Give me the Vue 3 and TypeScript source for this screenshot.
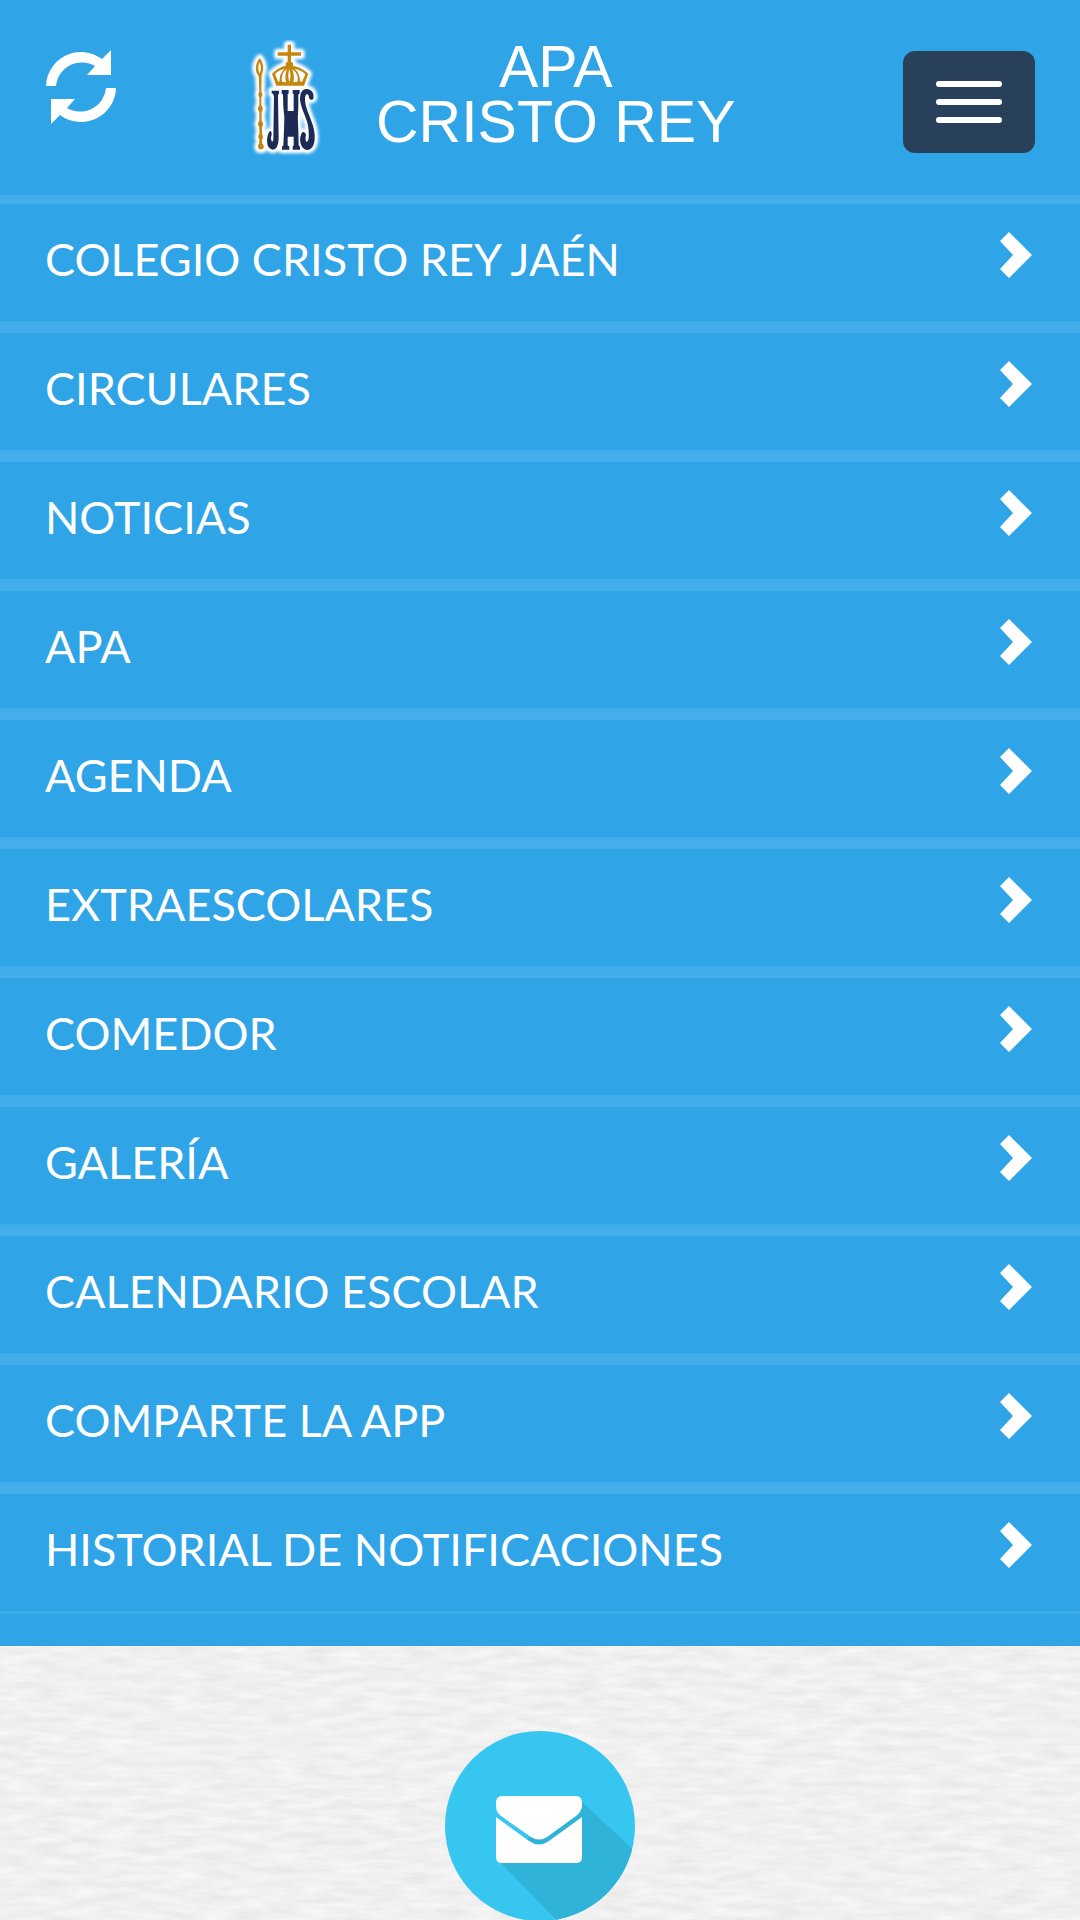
<script setup lang="ts">
interface MenuEntry {
  label: string
  href: string
}

const entries: MenuEntry[] = [
  { label: 'COLEGIO CRISTO REY JAÉN', href: '#colegio' },
  { label: 'CIRCULARES', href: '#circulares' },
  { label: 'NOTICIAS', href: '#noticias' },
  { label: 'APA', href: '#apa' },
  { label: 'AGENDA', href: '#agenda' },
  { label: 'EXTRAESCOLARES', href: '#extraescolares' },
  { label: 'COMEDOR', href: '#comedor' },
  { label: 'GALERÍA', href: '#galeria' },
  { label: 'CALENDARIO ESCOLAR', href: '#calendario' },
  { label: 'COMPARTE LA APP', href: '#comparte' },
  { label: 'HISTORIAL DE NOTIFICACIONES', href: '#historial' },
]
</script>

<template>
  <div class="page">
    <div class="navbar">
      <header class="header">
        <button class="refresh" type="button" aria-label="Actualizar">
          <svg viewBox="0 0 70 74" width="70" height="74" aria-hidden="true">
            <path d="M0 36A35 35 0 0 1 56 9L65 0V25H41L49 16A26 26 0 0 0 10 36Z" />
            <path d="M70 38A35 35 0 0 1 14 65L5 74V49H29L21 58A26 26 0 0 0 60 38Z" />
          </svg>
        </button>

        <a class="brand" href="#inicio">
          <svg class="emblem" viewBox="60 30 240 360" width="80" height="120" aria-hidden="true">
            <defs>
              <filter id="halo" x="-20%" y="-20%" width="140%" height="140%">
                <feGaussianBlur stdDeviation="4" />
              </filter>
              <g id="staff-crown">
                <path d="M95 84C80 104 80 124 92 138H99C109 122 108 100 95 84Z" />
                <path d="M92 136H101L100 185Q106 193 100 202V226Q108 236 101 246V272Q109 282 102 292V312Q108 321 102 329V340Q112 350 104 358H93Q86 350 94 340V329Q88 321 94 312V292Q86 282 94 272V246Q86 236 94 226V202Q88 193 94 185Z" />
                <path d="M179 44H189V67H219V77H189V96L195 98V108Q217 110 241 131L228 167H145L132 131Q152 111 173 107V98L179 95V77H149V67H179Z" />
              </g>
              <g id="monogram">
                <path d="M131 182H153V190Q149 194 150 202L152 326Q151 358 134 359Q118 357 117 333Q118 311 126 303Q132 304 131 314Q126 324 131 334Q136 337 136 324L138 202Q137 191 131 190Z" />
                <path d="M161 180H182V190L179 193V243H197V193L194 190V180H215V190L211 194V230Q208 262 211 300L212 346L216 350V359H194V350L197 346V320H179V346L184 350V359H162V350L166 346L168 300Q171 262 166 230L165 194L161 190Z" />
                <path d="M237 177C218 176 212 200 219 224C226 250 242 274 242 306Q244 334 236 336Q230 330 234 314Q231 304 223 307C209 327 219 361 239 360C263 356 265 319 254 284C245 256 231 232 231 208Q230 194 238 192Q244 195 243 204Q249 214 256 206C260 190 250 178 237 177Z" />
              </g>
            </defs>
            <g class="halo" filter="url(#halo)">
              <use href="#staff-crown" />
              <use href="#monogram" />
            </g>
            <use class="gold" href="#staff-crown" />
            <path class="slit" d="M95 96Q87 113 95 131Q102 113 95 96Z" />
            <path class="gaps" d="M141 133Q150 121 170 116Q153 131 155 152L151 156ZM162 155Q157 131 177 117Q169 135 174 157ZM232 133Q222 121 200 116Q216 132 216 153L222 156ZM209 155Q213 132 192 117Q201 136 196 157ZM184 118Q178 136 184 157Q191 137 184 118Z" />
            <use class="navy" href="#monogram" />
          </svg>
          <span class="brand-name">
            <span>APA</span>
            <span>CRISTO REY</span>
          </span>
        </a>

        <button class="toggle" type="button" aria-label="Menú">
          <span class="bar"></span>
          <span class="bar"></span>
          <span class="bar"></span>
        </button>
      </header>

      <nav aria-label="Principal">
        <ul class="menu">
          <li v-for="entry in entries" :key="entry.href" class="menu-item">
            <a class="menu-link" :href="entry.href">
              <span>{{ entry.label }}</span>
              <svg viewBox="0 0 32 46" width="32" height="46" aria-hidden="true">
                <path d="M0 9L9 0L32 23L9 46L0 37L13 23Z" />
              </svg>
            </a>
          </li>
        </ul>
      </nav>
    </div>

    <main class="paper">
      <svg class="texture" width="100%" height="100%" aria-hidden="true">
        <filter id="grain" x="0" y="0" width="100%" height="100%" color-interpolation-filters="sRGB">
          <feTurbulence type="fractalNoise" baseFrequency="0.03 0.14" numOctaves="4" seed="7" />
          <feColorMatrix values="0.09 0 0 0 0.896  0.09 0 0 0 0.896  0.09 0 0 0 0.896  0 0 0 0 1" />
        </filter>
        <rect width="100%" height="100%" filter="url(#grain)" />
      </svg>
      <a class="mail" href="#contacto" aria-label="Contacto">
        <svg viewBox="0 0 191 191" width="191" height="191" aria-hidden="true">
          <clipPath id="disc"><circle cx="95" cy="95" r="95" /></clipPath>
          <circle cx="95" cy="95" r="95" fill="#37c6f0" />
          <path d="M134 68L200 130V200H122L54 130Z" fill="#30b3d8" clip-path="url(#disc)" />
          <path d="M57 65H131Q137 65 137 72V76Q136 81 131 85L102 106Q94 111 86 106L56 85Q51 81 51 76V72Q51 65 57 65Z" fill="#fff" />
          <path d="M51 86L84 110Q94 117 104 110L137 86V126Q137 132 131 132H57Q51 132 51 126Z" fill="#fff" />
        </svg>
      </a>
    </main>
  </div>
</template>

<style>
body {
  margin: 0;
}
</style>

<style scoped>
.page {
  display: flex;
  flex-direction: column;
  height: 100vh;
  overflow: hidden;
  font-family: Lato, 'Liberation Sans', sans-serif;
  color: #fff;
}

.navbar {
  flex: none;
  padding-bottom: 32px;
  background: #2fa4e7;
}

.header {
  display: flex;
  align-items: flex-start;
  box-sizing: border-box;
  height: 195px;
  padding: 40px 45px 0 46px;
}

.refresh {
  margin: 10px 132px 0 0;
  padding: 0;
  border: 0;
  background: none;
}

.refresh svg,
.emblem {
  display: block;
}

.refresh path,
.menu-link path {
  fill: #fff;
}

.brand {
  display: flex;
  gap: 48px;
  color: #fff;
  text-decoration: none;
}

.brand-name {
  display: flex;
  flex-direction: column;
  align-items: center;
  font: 59px/55px 'Liberation Sans', Arial, sans-serif;
  white-space: nowrap;
}

.halo {
  fill: #fff;
  stroke: #fff;
  stroke-width: 22px;
  stroke-linejoin: round;
}

.gold {
  fill: #c5860f;
}

.slit,
.gaps {
  fill: #fff;
}

.navy {
  fill: #1c2b55;
}

.toggle {
  display: flex;
  flex-direction: column;
  align-items: center;
  justify-content: center;
  gap: 12px;
  width: 132px;
  height: 102px;
  margin: 11px 0 0 auto;
  padding: 0;
  border: 0;
  border-radius: 12px;
  background: #28405a;
}

.bar {
  width: 66px;
  height: 6px;
  border-radius: 3px;
  background: #fff;
}

.menu {
  margin: 0;
  padding: 0;
  list-style: none;
}

.menu-item {
  border-top: 9px solid #44adeb;
  border-bottom: 3px solid #3dadec;
}

.menu-link {
  display: flex;
  align-items: center;
  justify-content: space-between;
  padding: 0 48px 6px 45px;
  font-size: 45px;
  line-height: 111px;
  color: #fff;
  text-decoration: none;
}

.menu-link svg {
  margin-bottom: 10px;
}

.paper {
  position: relative;
  display: flex;
  flex: 1;
  align-items: flex-start;
  justify-content: center;
  min-height: 0;
  padding-top: 85px;
  background: #f0f0f0;
}

.texture {
  position: absolute;
  inset: 0;
}

.mail {
  position: relative;
}

.mail svg {
  display: block;
}
</style>
